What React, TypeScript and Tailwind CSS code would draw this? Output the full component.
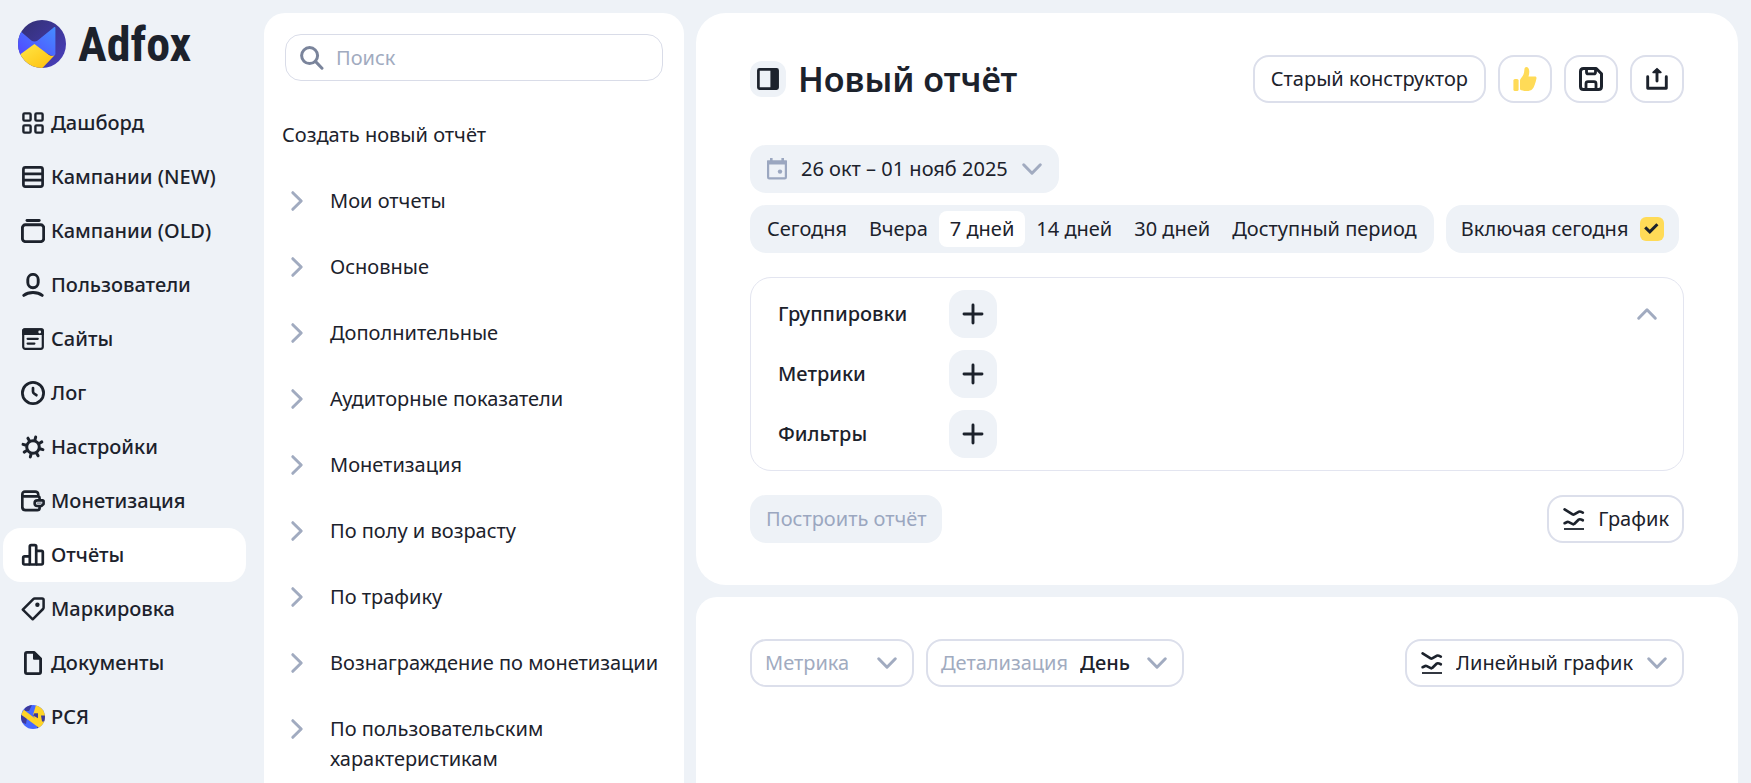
import React, { useState } from 'react';

type IconProps = { className?: string };

const DashboardIcon = () => (
  <svg viewBox="0 0 24 24" className="size-6 shrink-0" fill="none" stroke="currentColor" strokeWidth="2.4">
    <rect x="2.400" y="2.400" width="7.200" height="7.200" rx="1.2" />
    <rect x="14.400" y="2.400" width="7.200" height="7.200" rx="1.2" />
    <rect x="2.400" y="14.400" width="7.200" height="7.200" rx="1.2" />
    <rect x="14.400" y="14.400" width="7.200" height="7.200" rx="1.2" />
  </svg>
);

const RowsIcon = () => (
  <svg viewBox="0 0 24 24" className="size-6 shrink-0" fill="none" stroke="currentColor" strokeWidth="2.7">
    <rect x="2.4" y="2.4" width="19.2" height="19.2" rx="2" />
    <path d="M2 8.8h20M2 15.2h20" />
  </svg>
);

const StackIcon = () => (
  <svg viewBox="0 0 24 24" className="size-6 shrink-0" fill="none" stroke="currentColor" strokeWidth="2.9">
    <path d="M6 1.5h12.2" strokeLinecap="round" />
    <rect x="1.4" y="5.8" width="21.3" height="16.8" rx="3" />
  </svg>
);

const UserIcon = () => (
  <svg viewBox="0 0 24 24" className="size-6 shrink-0" fill="none" stroke="currentColor" strokeWidth="2.9">
    <rect x="6.8" y="1.4" width="10.4" height="13.4" rx="5.2" />
    <path d="M2.8 22.4c4.6-3.8 13.8-3.8 18.4 0" strokeLinecap="round" />
  </svg>
);

const SiteIcon = () => (
  <svg viewBox="0 0 24 24" className="size-6 shrink-0" fill="none" stroke="currentColor" strokeWidth="2.2">
    <rect x="2.2" y="2.4" width="19.6" height="19.4" rx="2" />
    <path d="M2.2 3.6c0-.8.4-1.2 1.2-1.2h17.2c.8 0 1.2.4 1.2 1.2V7H2.2z" fill="currentColor" />
    <circle cx="18.7" cy="5" r="1.4" fill="#eef2f7" stroke="none" />
    <path d="M6.6 11.8h10.2M6.6 16.6h6.8" strokeLinecap="round" />
  </svg>
);

const ClockIcon = () => (
  <svg viewBox="0 0 24 24" className="size-6 shrink-0" fill="none" stroke="currentColor" strokeWidth="2.8">
    <circle cx="12" cy="12" r="10.6" />
    <path d="M12 7v3.6c0 .9.3 1.4 1 1.9l2.4 1.7" strokeWidth="2.7" strokeLinecap="round" />
  </svg>
);

const GearIcon = () => (
  <svg viewBox="0 0 24 24" className="size-6 shrink-0" fill="none" stroke="currentColor" strokeWidth="3">
    <circle cx="12" cy="12" r="6.3" />
    <g transform="rotate(15 12 12)" strokeLinecap="round">
      <path d="M12 4V1.700M12 22.300V20M4 12H1.700M22.300 12H20M6.300 6.300 4.800 4.800M19.200 19.200l-1.500-1.500M6.300 17.700l-1.500 1.500M19.200 4.800l-1.500 1.500" />
    </g>
  </svg>
);

const WalletIcon = () => (
  <svg viewBox="0 0 24 24" className="size-6 shrink-0" fill="none" stroke="currentColor" strokeWidth="2.6">
    <path d="M18.6 10.6V9.400c0-1.200-.8-2-2-2H3.200c-1.100 0-1.900-.8-1.900-1.900 0-1.700 1-2.900 2.700-2.900h10.200c1.700 0 2.800 1 3 2.600l.2 2.200" />
    <path d="M1.300 5.400v12.400c0 2 1.200 3.400 3.200 3.400h11.700c1.500 0 2.400-.9 2.400-2.300v-1.200" strokeWidth="2.7" />
    <path d="M22 11.400h-5.600a2.800 2.800 0 0 0 0 5.600h4l2.200-2v-3z" strokeWidth="2.600" strokeLinejoin="round" />
    <path d="M16.500 14.200H20" stroke="#9aa0ac" strokeWidth="1.800" strokeLinecap="round" />
  </svg>
);

const BarsIcon = () => (
  <svg viewBox="0 0 24 24" className="size-6 shrink-0" fill="none" stroke="currentColor" strokeWidth="2.7" strokeLinejoin="round">
    <path d="M8.800 21.500H3.600c-.9 0-1.400-.5-1.400-1.400v-5.400c0-.9.500-1.400 1.400-1.400h5.200" />
    <path d="M8.800 21.500v-18c0-.9.500-1.400 1.400-1.400h3.600c.9 0 1.400.5 1.400 1.400v18z" />
    <path d="M15.200 7.900h5.200c.9 0 1.400.5 1.400 1.400v10.800c0 .9-.5 1.400-1.400 1.400h-5.200" />
  </svg>
);

const TagIcon = () => (
  <svg viewBox="0 0 24 24" className="size-6 shrink-0" fill="none" stroke="currentColor" strokeWidth="2.5" strokeLinejoin="round">
    <path d="M1.800 12.600 12.300 2.100c.4-.4.900-.6 1.400-.6h7.400c.9 0 1.500.6 1.500 1.500v7.600c0 .6-.2 1-.6 1.400L11.700 22.300z" />
    <circle cx="16.400" cy="7.700" r="2.200" fill="currentColor" stroke="none" />
  </svg>
);

const DocIcon = () => (
  <svg viewBox="0 0 24 24" className="size-6 shrink-0" fill="none" stroke="currentColor" strokeWidth="2.8" strokeLinejoin="round">
    <path d="M4.400 3v18c0 1.100.5 1.600 1.600 1.600h12c1.100 0 1.600-.5 1.600-1.600V7.800l-6.400-6.400H6c-1.100 0-1.600.5-1.600 1.600z" />
    <path d="M13 1.600v6.200h6.400z" fill="currentColor" strokeWidth="2" />
  </svg>
);

const PartnerIcon = () => (
  <svg viewBox="0 0 24 24" className="size-6 shrink-0">
    <clipPath id="partner">
      <circle cx="12" cy="12" r="12" />
    </clipPath>
    <g clipPath="url(#partner)">
      <path d="M0 0h24v24H0z" fill="#4668ff" />
      <path d="M5 0h6L8 6 3 6zM0 10l6 3-1 6-5-2zM16 24l3-5-6-3 3 4z" fill="#3d3a9c" />
      <path d="M15 0h9v24h-5l-7-14z" fill="#ffd426" />
      <path d="M20 10.500h4v6h-3z" fill="#3d3a9c" />
      <path d="M13.400 8.200 17 8.200v5l-5-2.600z" fill="#3d3a9c" />
      <path d="M2.800 4.800 21.600 19.200l-3 4L0 9.400z" fill="#ffd426" />
    </g>
  </svg>
);

const AdfoxLogo = () => (
  <svg viewBox="0 0 48 48" className="size-12 shrink-0">
    <defs>
      <linearGradient id="lg-back" x1="0" y1="0" x2="1" y2="1">
        <stop offset="0" stopColor="#322f70" />
        <stop offset="1" stopColor="#4a3fc0" />
      </linearGradient>
      <linearGradient id="lg-blue" x1="0" y1="1" x2="1" y2="0">
        <stop offset="0" stopColor="#5244ff" />
        <stop offset="1" stopColor="#458eff" />
      </linearGradient>
      <linearGradient id="lg-yellow" x1="0" y1="0" x2="1" y2="1">
        <stop offset="0" stopColor="#ffe94a" />
        <stop offset="1" stopColor="#ffbe0a" />
      </linearGradient>
      <clipPath id="logo">
        <circle cx="24" cy="24" r="24" />
      </clipPath>
    </defs>
    <g clipPath="url(#logo)">
      <path d="M0 0h48v48H0z" fill="url(#lg-back)" />
      <path d="M0 10l3.700 2.200 9.600 8.200c1.900 1.400 4.400 1.400 6.400 0L36 7.200c.7-.6 1.400-.3 1.400.6v26c0 1.600-1.400 2.300-3 2.300L16.400 27 0 37z" fill="url(#lg-blue)" />
      <path d="M16.400 24 0 36v12h24.400l12-12.400c-1.800.6-4 .3-5.400-.7z" fill="url(#lg-yellow)" />
    </g>
  </svg>
);

const Chevron = ({ className = '' }: IconProps) => (
  <svg viewBox="0 0 24 24" className={`size-6 shrink-0 text-[#a1abc0] ${className}`} fill="none" stroke="currentColor" strokeWidth="3" strokeLinecap="round" strokeLinejoin="round">
    <path d="m3.700 7.800 8.300 8.400 8.300-8.400" />
  </svg>
);

const LinesIcon = () => (
  <svg viewBox="0 0 24 24" className="size-6 shrink-0" fill="none" stroke="currentColor" strokeLinecap="round" strokeLinejoin="round">
    <path d="m2.600 2.400 8 5c.6.300 1 .300 1.600 0l4.800-2.800c.8-.4 1.400-.2 3.800 1" strokeWidth="2.700" />
    <path d="m2.600 16.200 2.600-1.200c.6-.2 1-.2 1.600.1l4 2c.6.300 1 .200 1.400-.2l4.600-4.300c1-.8 1.800-.4 4 .7" strokeWidth="2.700" />
    <path d="M2 22h20" strokeWidth="1.800" strokeLinecap="butt" />
  </svg>
);

const menu = [
  { label: 'Дашборд', icon: DashboardIcon },
  { label: 'Кампании (NEW)', icon: RowsIcon },
  { label: 'Кампании (OLD)', icon: StackIcon },
  { label: 'Пользователи', icon: UserIcon },
  { label: 'Сайты', icon: SiteIcon },
  { label: 'Лог', icon: ClockIcon },
  { label: 'Настройки', icon: GearIcon },
  { label: 'Монетизация', icon: WalletIcon },
  { label: 'Отчёты', icon: BarsIcon },
  { label: 'Маркировка', icon: TagIcon },
  { label: 'Документы', icon: DocIcon },
  { label: 'РСЯ', icon: PartnerIcon },
];

const reportGroups = [
  'Мои отчеты',
  'Основные',
  'Дополнительные',
  'Аудиторные показатели',
  'Монетизация',
  'По полу и возрасту',
  'По трафику',
  'Вознаграждение по монетизации',
  'По пользовательским характеристикам',
];

const periods = ['Сегодня', 'Вчера', '7 дней', '14 дней', '30 дней', 'Доступный период'];

const Sidebar: React.FC = () => (
  <aside className="w-[264px] shrink-0 pl-[3px] pr-[18px]">
    <a href="#" className="flex h-24 items-start gap-3 pl-[15px] pt-5">
      <AdfoxLogo />
      <span className="font-['Liberation_Sans_Narrow','Roboto_Condensed','Roboto',sans-serif] text-[48px] leading-[50px] font-bold">Adfox</span>
    </a>
    <nav>
      {menu.map(({ label, icon: Icon }) => (
        <a
          key={label}
          href="#"
          className={`flex h-[54px] items-center gap-1.5 rounded-[18px] pl-[18px] font-medium whitespace-nowrap ${label === 'Отчёты' ? 'bg-white' : ''}`}
        >
          <Icon />
          {label}
        </a>
      ))}
    </nav>
  </aside>
);

const ReportList: React.FC = () => (
  <section className="mt-[13px] w-[420px] shrink-0 overflow-hidden rounded-t-[21px] bg-white">
    <label className="mx-[21px] mt-[21px] flex h-[47px] items-center gap-3 rounded-2xl border border-[#d9dce8] pl-3.5">
      <svg viewBox="0 0 24 24" className="size-6 shrink-0 text-[#7a849b]" fill="none" stroke="currentColor" strokeWidth="3">
        <circle cx="9.600" cy="9.600" r="8" />
        <path d="m15.400 15.400 6.600 6.800" strokeLinecap="round" />
      </svg>
      <input type="search" aria-label="Поиск" placeholder="Поиск" className="w-full bg-transparent outline-none placeholder:text-[#a1abc0]" />
    </label>
    <h2 className="mt-[39px] ml-[18px]">Создать новый отчёт</h2>
    <ul className="mt-[18px]">
      {reportGroups.map((name) => (
        <li key={name}>
          <button className="flex w-full items-start gap-[21px] py-[18px] pl-[21px] text-left">
            <span className="flex h-[30px] items-center">
              <Chevron className="-rotate-90" />
            </span>
            <span>{name}</span>
          </button>
        </li>
      ))}
    </ul>
  </section>
);

const outlined = 'flex h-12 items-center justify-center rounded-2xl border-2 border-[#dcdfeb] bg-white';

export default function App() {
  const [period, setPeriod] = useState('7 дней');
  const [withToday, setWithToday] = useState(true);

  return (
    <div className="flex h-screen overflow-hidden bg-[#eef2f7] font-['Noto_Sans',sans-serif] text-[20px] leading-[30px] text-[#1c222c]">
      <Sidebar />
      <ReportList />

      <main className="mt-[13px] mr-[13px] ml-3 flex min-w-0 flex-1 flex-col gap-3">
        <section className="rounded-[30px] bg-white px-[54px] pt-[42px] pb-[42px]">
          {/* Header */}
          <header className="flex items-center gap-3">
            <button aria-label="Скрыть панель" className="flex size-9 items-center justify-center rounded-xl bg-[#eef2f7]">
              <svg viewBox="0 0 24 24" className="size-6" fill="none" stroke="currentColor" strokeWidth="2.700">
                <rect x="2.400" y="2.400" width="19.200" height="19.200" rx="1" />
                <path d="M14.400 2h7.400v20h-7.400z" fill="currentColor" stroke="none" />
              </svg>
            </button>
            <h1 className="mr-auto text-[34px] leading-[48px] font-semibold">Новый отчёт</h1>
            <button className={`${outlined} px-4`}>Старый конструктор</button>
            <button aria-label="Нравится" className={`${outlined} w-[54px]`}>
              <svg viewBox="0 0 24 24" className="size-6" fill="#ffdb57">
                <rect x="0.400" y="12" width="5.200" height="12" rx="1.600" />
                <path d="M7 13.600c0-1 .4-1.800 1.200-2.600 2-2 3-4.200 3.200-8.400C11.500.9 12.300 0 13.200 0c1.900 0 3.100 2 3.100 4.800 0 1.700-.4 3.300-.8 4.600H22c1.100 0 1.700.8 1.500 1.900-.3 2-.9 3.900-1.700 6.200-1.500 4.500-3.300 6.500-7.800 6.500-2.800 0-5-.5-7-1.600z" />
              </svg>
            </button>
            <button aria-label="Сохранить" className={`${outlined} w-[54px]`}>
              <svg viewBox="0 0 24 24" className="size-6" fill="none" stroke="currentColor" strokeWidth="3" strokeLinejoin="round">
                <path d="M4.500 1.500h12.700l5.300 5.300v12.700c0 2-1 3-3 3h-15c-2 0-3-1-3-3v-15c0-2 1-3 3-3z" />
                <path d="M7.500 2v3.200c0 1.100.6 1.700 1.700 1.700h5.600c1.100 0 1.700-.6 1.700-1.700V2M7 22v-5.300c0-1.300.7-2 2-2h6c1.300 0 2 .7 2 2V22" strokeWidth="2.800" />
              </svg>
            </button>
            <button aria-label="Поделиться" className={`${outlined} w-[54px]`}>
              <svg viewBox="0 0 24 24" className="size-6" fill="none" stroke="currentColor" strokeWidth="2.900" strokeLinecap="round" strokeLinejoin="round">
                <path d="M2.700 9.800v11.400h18.600V9.800M12 14V3.500" />
                <path d="M12 1.800 8.200 5.300h7.600z" fill="currentColor" strokeWidth="1.800" />
              </svg>
            </button>
          </header>

          {/* Period */}
          <button className="mt-[42px] flex h-12 items-center rounded-2xl bg-[#eef2f7] px-[15px]">
            <svg viewBox="0 0 24 24" className="mr-3 size-6 text-[#9ba7c0]" fill="none" stroke="currentColor" strokeWidth="2.200">
              <path d="M3.100 4.500h17.800v15.800c0 .7-.4 1.100-1.100 1.100H4.200c-.7 0-1.100-.4-1.100-1.100z" strokeLinejoin="round" />
              <path d="M2 3.400h20v4H2zM5 1h2.600v3H5zM16.400 1H19v3h-2.600z" fill="currentColor" stroke="none" />
              <circle cx="15" cy="14.600" r="2.200" fill="currentColor" stroke="none" />
            </svg>
            26 окт – 01 нояб 2025
            <Chevron className="ml-3" />
          </button>
          <div className="mt-3 flex gap-3">
            <div className="flex h-12 items-center rounded-2xl bg-[#eef2f7] px-1.5 whitespace-nowrap">
              {periods.map((p) => (
                <button
                  key={p}
                  onClick={() => setPeriod(p)}
                  className={`h-9 rounded-lg px-[11px] ${p === period ? 'bg-white' : ''}`}
                >
                  {p}
                </button>
              ))}
            </div>
            <label className="flex h-12 items-center gap-3 rounded-2xl bg-[#eef2f7] px-[15px] whitespace-nowrap">
              Включая сегодня
              <span className="grid size-6 place-items-center">
                <input
                  type="checkbox"
                  checked={withToday}
                  onChange={(e) => setWithToday(e.target.checked)}
                  className="col-start-1 row-start-1 size-6 appearance-none rounded-md bg-white checked:bg-[#ffdb57]"
                />
                {withToday && (
                  <svg viewBox="0 0 24 24" className="pointer-events-none col-start-1 row-start-1 size-6" fill="none" stroke="currentColor" strokeWidth="3">
                    <path d="m5.200 10.400 4.600 4.400 7.600-7.600" />
                  </svg>
                )}
              </span>
            </label>
          </div>

          {/* Query builder */}
          <div className="mt-6 flex items-start justify-between rounded-[21px] border border-[#e3e5f0] py-3 pr-6 pl-[27px]">
            <div className="flex flex-col gap-3">
              {['Группировки', 'Метрики', 'Фильтры'].map((name) => (
                <div key={name} className="flex items-center">
                  <span className="w-[171px] font-medium">{name}</span>
                  <button aria-label={`Добавить: ${name}`} className="flex size-12 items-center justify-center rounded-2xl bg-[#eef2f7]">
                    <svg viewBox="0 0 24 24" className="size-6" fill="none" stroke="currentColor" strokeWidth="2.900" strokeLinecap="round">
                      <path d="M12 3v18M3 12h18" />
                    </svg>
                  </button>
                </div>
              ))}
            </div>
            <button aria-label="Свернуть" className="flex h-12 items-center">
              <Chevron className="rotate-180" />
            </button>
          </div>

          <div className="mt-6 flex justify-between">
            <button disabled className="h-12 rounded-2xl bg-[#eef2f7] px-4 text-[#9ba7c0]">Построить отчёт</button>
            <button className={`${outlined} gap-3 px-[13px]`}>
              <LinesIcon />
              График
            </button>
          </div>
        </section>

        {/* Chart controls */}
        <section className="flex flex-1 items-start gap-3 rounded-t-[21px] bg-white px-[54px] pt-[42px]">
          <label className={`${outlined} px-[13px]`}>
            <select aria-label="Метрика" className="w-[110px] appearance-none bg-transparent text-[#a1abc0] outline-none">
              <option>Метрика</option>
            </select>
            <Chevron />
          </label>
          <label className={`${outlined} px-[13px]`}>
            <span className="mr-3 text-[#a1abc0]">Детализация</span>
            <select className="mr-[15px] appearance-none bg-transparent font-medium outline-none">
              <option>День</option>
            </select>
            <Chevron />
          </label>
          <label className={`${outlined} ml-auto px-[13px]`}>
            <LinesIcon />
            <select aria-label="Тип графика" className="mx-3 appearance-none bg-transparent outline-none">
              <option>Линейный график</option>
            </select>
            <Chevron />
          </label>
        </section>
      </main>
    </div>
  );
}
